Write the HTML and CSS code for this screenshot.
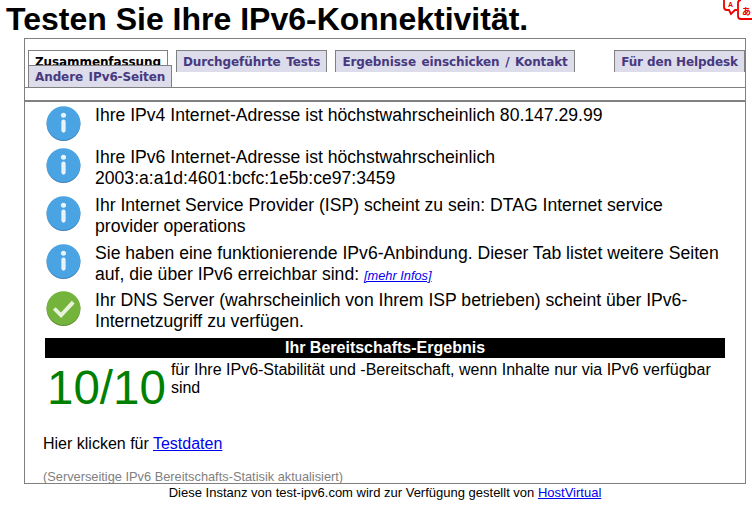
FILE: index.html
```html
<!DOCTYPE html>
<html lang="de">
<head>
  <meta charset="UTF-8" />
  <title>Testen Sie Ihre IPv6-Konnektivität.</title>
  <link rel="stylesheet" href="styles.css">
</head>
<body>

<svg class="translate-icon" width="30" height="21" viewBox="0 0 30 21">
  <path d="M2 -4 V7 Q2 10 5 10 H7 L9 14 L13 10 H15" fill="none" stroke="#ee0000" stroke-width="1.8"/>
  <text x="6" y="7" class="translate-a">A</text>
  <path d="M19 0 Q16 0 16 3 V16 Q16 19 19 19 H30" fill="none" stroke="#ee0000" stroke-width="1.8"/>
  <text x="20" y="15" class="translate-b">あ</text>
</svg>

<h1 class="title">Testen Sie Ihre IPv6-Konnektivität.</h1>

<div class="main-box">
  <ul class="tabs">
    <li class="tab tab-active"><a href="#">Zusammenfassung</a></li>
    <li class="tab"><a href="#">Durchgeführte Tests</a></li>
    <li class="tab"><a href="#">Ergebnisse einschicken / Kontakt</a></li>
    <li class="tab tab-right"><a href="#">Für den Helpdesk</a></li>
    <li class="tab"><a href="#">Andere IPv6-Seiten</a></li>
  </ul>

  <div class="panel">
    <div class="msg">
      <svg class="msg-icon" viewBox="0 0 36 36"><use href="#icon-info"/></svg>
      <p>Ihre IPv4 Internet-Adresse ist höchstwahrscheinlich 80.147.29.99</p>
    </div>
    <div class="msg">
      <svg class="msg-icon" viewBox="0 0 36 36"><use href="#icon-info"/></svg>
      <p>Ihre IPv6 Internet-Adresse ist höchstwahrscheinlich<br>2003:a:a1d:4601:bcfc:1e5b:ce97:3459</p>
    </div>
    <div class="msg">
      <svg class="msg-icon" viewBox="0 0 36 36"><use href="#icon-info"/></svg>
      <p>Ihr Internet Service Provider (ISP) scheint zu sein: DTAG Internet service provider operations</p>
    </div>
    <div class="msg">
      <svg class="msg-icon" viewBox="0 0 36 36"><use href="#icon-info"/></svg>
      <p>Sie haben eine funktionierende IPv6-Anbindung. Dieser Tab listet weitere Seiten auf, die über IPv6 erreichbar sind: <a class="more" href="#">[mehr Infos]</a></p>
    </div>
    <div class="msg">
      <svg class="msg-icon" viewBox="0 0 36 36">
        <circle cx="18" cy="18.6" r="17.4" fill="#5d8a2c"/>
        <circle cx="18" cy="17.6" r="17.4" fill="#74b33c"/>
        <path d="M8.5 18 L15.5 25 L28 11.5" fill="none" stroke="#e9f3dc" stroke-width="4"/>
      </svg>
      <p>Ihr DNS Server (wahrscheinlich von Ihrem ISP betrieben) scheint über IPv6-Internetzugriff zu verfügen.</p>
    </div>

    <div class="score-head">Ihr Bereitschafts-Ergebnis</div>
    <div class="score-row">
      <span class="score">10/10</span>
      <span class="score-text">für Ihre IPv6-Stabilität und -Bereitschaft, wenn Inhalte nur via IPv6 verfügbar sind</span>
    </div>

    <p class="details">Hier klicken für <a href="#">Testdaten</a></p>
    <p class="stats">(Serverseitige IPv6 Bereitschafts-Statisik aktualisiert)</p>
  </div>
</div>

<p class="footer">Diese Instanz von test-ipv6.com wird zur Verfügung gestellt von <a href="#">HostVirtual</a></p>

<svg class="icon-defs" width="0" height="0">
  <symbol id="icon-info" viewBox="0 0 36 36">
    <circle cx="18" cy="18.6" r="17.4" fill="#3b7fb5"/>
    <circle cx="18" cy="17.6" r="17.4" fill="#4aa3e2"/>
    <circle cx="18" cy="9.5" r="2.6" fill="#e8f3fb"/>
    <rect x="15.8" y="14" width="4.4" height="13.5" rx="2.2" fill="#e8f3fb"/>
  </symbol>
</svg>

</body>
</html>
```

FILE: styles.css
```css
body {
  font-family: "Liberation Sans", Arial, sans-serif;
  background: #ffffff;
  color: #000000;
  margin: 0;
  padding: 0;
}

.title {
  font-size: 32px;
  line-height: 34px;
  margin: 0;
  padding: 2px 0 2px 6px;
}

.translate-icon {
  position: absolute;
  top: 0;
  right: 0;
}

.translate-a {
  font: bold 7px "Liberation Sans", sans-serif;
  fill: #ee0000;
}

.translate-b {
  font: bold 9px "Noto Sans CJK JP", sans-serif;
  fill: #ee0000;
}

.icon-defs {
  position: absolute;
}

.main-box {
  width: 720px;
  height: 444px;
  margin-left: 24px;
  border: 1px solid #808080;
  overflow: hidden;
}

.tabs {
  display: flex;
  flex-wrap: wrap;
  align-content: flex-start;
  column-gap: 8px;
  list-style: none;
  margin: 0;
  padding: 11px 0 0 3px;
  height: 37px;
  border-bottom: 1px solid #808080;
}

.tab {
  height: 21px;
  margin-bottom: -7px;
  background: #dddcea;
  border: 1px solid #808080;
  border-bottom: none;
  padding: 0 6px;
  font: bold 12px/22px "DejaVu Sans", Verdana, sans-serif;
  letter-spacing: -0.1px;
  word-spacing: 1.5px;
}

.tab a {
  color: #47397f;
  text-decoration: none;
}

.tab-active {
  background: #ffffff;
}

.tab-active a {
  color: #000000;
}

.tab-right {
  margin-left: auto;
  word-spacing: 0;
}

.panel {
  margin-top: 12px;
  border-top: 2px solid #808080;
  padding: 3px 20px 0 20px;
}

.msg {
  display: flex;
  gap: 14px;
  min-height: 36.8px;
  padding-left: 1px;
  margin-bottom: 5.6px;
  font-size: 17.6px;
  line-height: 21px;
}

.msg p {
  margin: 0;
}

.msg-icon {
  flex: none;
  width: 35px;
  height: 35px;
  margin-top: 1px;
}

.more {
  font-size: 12.8px;
  font-style: italic;
  line-height: 1;
}

.score-head {
  background: #000000;
  color: #ffffff;
  font-weight: bold;
  font-size: 16px;
  line-height: 20px;
  text-align: center;
}

.score-row {
  display: flex;
  gap: 5px;
  margin-top: 3px;
  font-size: 16px;
  line-height: 18px;
}

.score {
  flex: none;
  color: #008000;
  font-size: 47.5px;
  line-height: 48px;
  margin-top: 3px;
  padding-left: 2px;
}

.details {
  margin: 22px 0 0 -2px;
  font-size: 16px;
  line-height: 20px;
}

.stats {
  margin: 15px 0 0 -2px;
  font-size: 12.8px;
  line-height: 16px;
  color: #808080;
}

.footer {
  margin: 0;
  padding-left: 18px;
  font-size: 13px;
  line-height: 18px;
  text-align: center;
}
```
